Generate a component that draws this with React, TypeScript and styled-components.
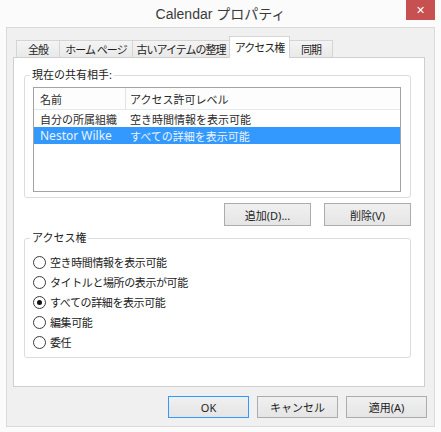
import styled, { createGlobalStyle } from "styled-components";

const GlobalStyle = createGlobalStyle`
  html, body {
    margin: 0;
    padding: 0;
    background: #fbfbfb;
  }
  body {
    font-family: "Noto Sans", "Noto Sans CJK JP", sans-serif;
    font-size: 11px;
    color: #222;
  }
  * { box-sizing: border-box; }
`;

const Window = styled.div`
  width: 441px;
  height: 432px;
  display: flex;
  flex-direction: column;
  background: #fbfbfb;
`;

const TitleBar = styled.div`
  height: 27px;
  display: grid;
  grid-template-columns: 1fr auto 1fr;
  align-items: start;
`;

const Title = styled.div`
  grid-column: 2;
  line-height: 28px;
  font-family: "Liberation Sans", "Noto Sans CJK JP", sans-serif;
  font-size: 14px;
  color: #3a3a3a;
`;

const CloseButton = styled.div`
  grid-column: 3;
  justify-self: end;
  width: 29px;
  height: 20px;
  margin-right: 6px;
  background: #c75050;
  color: #fff;
  display: flex;
  align-items: center;
  justify-content: center;
  font-family: "DejaVu Sans", sans-serif;
  font-size: 11px;
  font-weight: bold;
`;

const Frame = styled.div`
  flex: 1;
  margin: 0 6px 5px 6px;
  border: 1px solid #dadada;
  background: #f0f0f0;
  display: flex;
  flex-direction: column;
  padding: 8px 7px 8px 6px;
`;

const TabStrip = styled.div`
  display: flex;
  align-items: flex-end;
  height: 21px;
  margin-left: 3px;
`;

const Tab = styled.div<{ $w: number; $active?: boolean }>`
  position: relative;
  z-index: ${(p) => (p.$active ? 1 : 0)};
  width: ${(p) => p.$w}px;
  height: ${(p) => (p.$active ? 22 : 17)}px;
  margin-left: -1px;
  margin-bottom: ${(p) => (p.$active ? -1 : 0)}px;
  padding-bottom: ${(p) => (p.$active ? 2 : 0)}px;
  border: 1px solid #d5d5d5;
  border-bottom: none;
  background: ${(p) =>
    p.$active ? "#ffffff" : "linear-gradient(#f4f4f4, #e9e9e9)"};
  display: flex;
  align-items: center;
  justify-content: center;
  white-space: nowrap;
  letter-spacing: -1px;
  color: #1e1e1e;

  &:first-child {
    margin-left: 0;
  }
`;

const Content = styled.div`
  height: 330px;
  margin-right: 2px;
  background: #fff;
  border: 1px solid #cfcfcf;
  padding: 10px 13px 0 10px;
`;

const Group = styled.fieldset<{ $gap?: number }>`
  margin: ${(p) => p.$gap ?? 0}px 0 0 0;
  border: 1px solid #dcdcdc;
  border-radius: 3px;
  padding: 0 9px 5px 8px;
  min-width: 0;
`;

const Legend = styled.legend`
  padding: 0 2px;
  margin-left: -3px;
  font-size: 11px;
  line-height: 14px;
  color: #222;
  white-space: nowrap;
`;

const ListBox = styled.div`
  margin-top: 5px;
  height: 105px;
  border: 1px solid #a3a3a3;
  background: #fff;
`;

const ListRow = styled.div<{ $header?: boolean; $selected?: boolean }>`
  display: grid;
  grid-template-columns: 92px 1fr;
  align-items: center;
  height: ${(p) => (p.$header ? 22 : 17)}px;
  background: ${(p) =>
    p.$header ? "#fdfdfd" : p.$selected ? "#3399ff" : "transparent"};
  color: ${(p) => (p.$selected ? "#eaf3ff" : "#2a2a2a")};
  border-bottom: ${(p) => (p.$header ? "1px solid #e3e9f0" : "none")};
  white-space: nowrap;
`;

const Cell = styled.div<{ $header?: boolean; $first?: boolean }>`
  height: 100%;
  display: flex;
  align-items: center;
  padding-left: ${(p) => (p.$first ? 6 : 4)}px;
  border-right: ${(p) =>
    p.$header && p.$first ? "1px solid #e3e3e3" : "none"};
  overflow: hidden;
`;

const NameText = styled.span<{ $latin?: boolean }>`
  font-size: ${(p) => (p.$latin ? 12 : 11)}px;
`;

const ButtonRow = styled.div<{ $gap: number; $top: number }>`
  display: flex;
  justify-content: flex-end;
  gap: ${(p) => p.$gap}px;
  margin-top: ${(p) => p.$top}px;
`;

const Button = styled.div<{ $w: number; $h?: number; $default?: boolean }>`
  width: ${(p) => p.$w}px;
  height: ${(p) => p.$h ?? 23}px;
  border: 1px solid ${(p) => (p.$default ? "#3399ff" : "#acacac")};
  background: linear-gradient(#f0f0f0, #e5e5e5);
  display: flex;
  align-items: center;
  justify-content: center;
  font-size: 11px;
  color: #1e1e1e;
  white-space: nowrap;
`;

const RadioList = styled.div`
  padding-top: 7px;
  display: flex;
  flex-direction: column;
`;

const RadioRow = styled.label`
  height: 20px;
  display: flex;
  align-items: center;
  gap: 4px;
  white-space: nowrap;
  letter-spacing: -0.4px;
  color: #222;
`;

const RadioCircle = styled.span<{ $checked?: boolean }>`
  width: 13px;
  height: 13px;
  flex: none;
  border: 1px solid #3a3a3a;
  border-radius: 50%;
  background: #fff;
  display: flex;
  align-items: center;
  justify-content: center;

  &::after {
    content: "";
    width: 5px;
    height: 5px;
    border-radius: 50%;
    background: ${(p) => (p.$checked ? "#111" : "transparent")};
  }
`;

const tabs = [
  { label: "全般", w: 44 },
  { label: "ホーム ページ", w: 74 },
  { label: "古いアイテムの整理", w: 98 },
  { label: "アクセス権", w: 61, active: true },
  { label: "同期", w: 44 },
];

const members = [
  { name: "自分の所属組織", level: "空き時間情報を表示可能" },
  { name: "Nestor Wilke", level: "すべての詳細を表示可能", selected: true, latin: true },
];

const options = [
  "空き時間情報を表示可能",
  "タイトルと場所の表示が可能",
  "すべての詳細を表示可能",
  "編集可能",
  "委任",
];

export default function App() {
  return (
    <>
      <GlobalStyle />
      <Window>
        <TitleBar>
          <Title>Calendar プロパティ</Title>
          <CloseButton>✕</CloseButton>
        </TitleBar>
        <Frame>
          <TabStrip>
            {tabs.map((t) => (
              <Tab key={t.label} $w={t.w} $active={t.active}>
                {t.label}
              </Tab>
            ))}
          </TabStrip>
          <Content>
            <Group>
              <Legend>現在の共有相手:</Legend>
              <ListBox>
                <ListRow $header>
                  <Cell $header $first>名前</Cell>
                  <Cell $header>アクセス許可レベル</Cell>
                </ListRow>
                {members.map((m) => (
                  <ListRow key={m.name} $selected={m.selected}>
                    <Cell $first>
                      <NameText $latin={m.latin}>{m.name}</NameText>
                    </Cell>
                    <Cell>{m.level}</Cell>
                  </ListRow>
                ))}
              </ListBox>
            </Group>
            <ButtonRow $gap={13} $top={5}>
              <Button $w={87}>追加(D)...</Button>
              <Button $w={87}>削除(V)</Button>
            </ButtonRow>
            <Group $gap={5}>
              <Legend>アクセス権</Legend>
              <RadioList>
                {options.map((o, i) => (
                  <RadioRow key={o}>
                    <RadioCircle $checked={i === 2} />
                    {o}
                  </RadioRow>
                ))}
              </RadioList>
            </Group>
          </Content>
          <ButtonRow $gap={8} $top={9}>
            <Button $w={81} $h={22} $default>OK</Button>
            <Button $w={81} $h={22}>キャンセル</Button>
            <Button $w={81} $h={22}>適用(A)</Button>
          </ButtonRow>
        </Frame>
      </Window>
    </>
  );
}
